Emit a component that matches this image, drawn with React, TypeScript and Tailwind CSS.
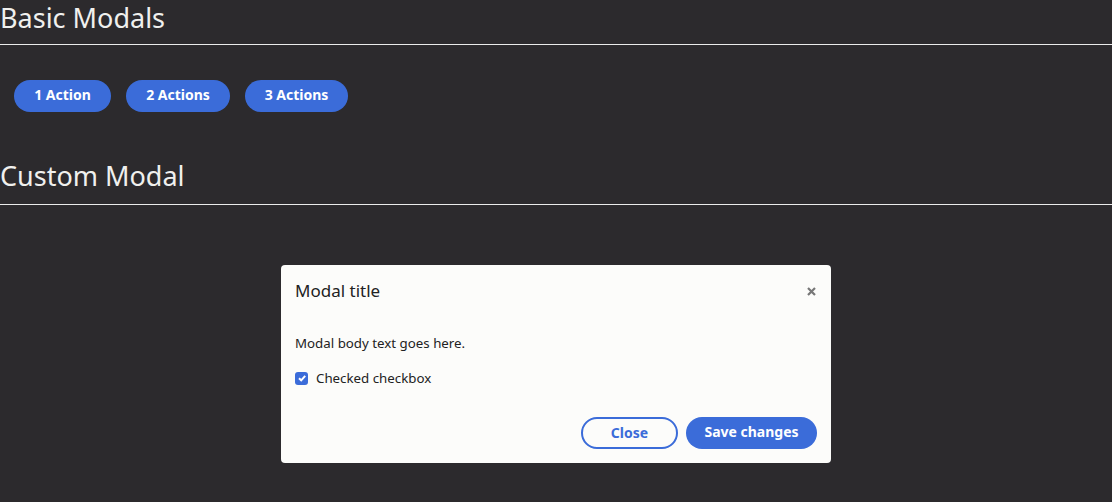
const App: React.FC = () => {
    return (
        <main className="w-full h-screen bg-[#2c2a2d] text-[#f0f0ee] font-['Noto_Sans',sans-serif] overflow-hidden">
            <h2 className="text-[27px] leading-[36px] pb-[8px] border-b border-[#ebebeb]">Basic Modals</h2>

            {/* basic buttons */}
            <div className="flex gap-[15px] pl-[14px] mt-[35px]">
                <button type="button" className="w-[97px] h-[32px] pb-[3px] rounded-full bg-[#3b6cd9] text-white text-[14px] font-bold">1 Action</button>
                <button type="button" className="w-[104px] h-[32px] pb-[3px] rounded-full bg-[#3b6cd9] text-white text-[14px] font-bold">2 Actions</button>
                <button type="button" className="w-[103px] h-[32px] pb-[3px] rounded-full bg-[#3b6cd9] text-white text-[14px] font-bold">3 Actions</button>
            </div>

            <h2 className="text-[27px] leading-[36px] mt-[46px] pb-[10px] border-b border-[#ebebeb]">Custom Modal</h2>

            {/* modal */}
            <div className="flex justify-center pt-[60px]">
                <div className="w-[550px] h-[198px] bg-[#fcfcfa] rounded-[4px] text-[#222] flex flex-col">
                    <div className="flex items-center justify-between px-[14px] pt-[14px]">
                        <h3 className="text-[17px] leading-[24px]">Modal title</h3>
                        <button type="button" className="text-[#777] mr-[1px]">
                            <svg width="9" height="9" viewBox="0 0 9 9">
                                <path d="M1 1 L8 8 M8 1 L1 8" stroke="currentColor" strokeWidth="2.2" />
                            </svg>
                        </button>
                    </div>
                    <p className="px-[14px] mt-[30px] text-[13.3px] leading-[20px]">Modal body text goes here.</p>
                    <label className="flex items-center gap-[8px] px-[14px] mt-[15px] text-[13.3px] leading-[20px]">
                        <span className="w-[13px] h-[13px] rounded-[3px] bg-[#3b6cd9] flex items-center justify-center">
                            <svg width="10" height="10" viewBox="0 0 10 10">
                                <path d="M2 5.2 L4.2 7.3 L8.2 2.8" fill="none" stroke="white" strokeWidth="2" />
                            </svg>
                        </span>
                        Checked checkbox
                    </label>
                    <div className="flex justify-end gap-[8px] px-[14px] mt-auto pb-[14px]">
                        <button type="button" className="w-[97px] h-[32px] pb-[2px] rounded-full border-2 border-[#3b6cd9] text-[#3b6cd9] text-[14px] font-bold">Close</button>
                        <button type="button" className="w-[131px] h-[32px] pb-[3px] rounded-full bg-[#3b6cd9] text-white text-[14px] font-bold">Save changes</button>
                    </div>
                </div>
            </div>
        </main>
    )
}

export default App;
